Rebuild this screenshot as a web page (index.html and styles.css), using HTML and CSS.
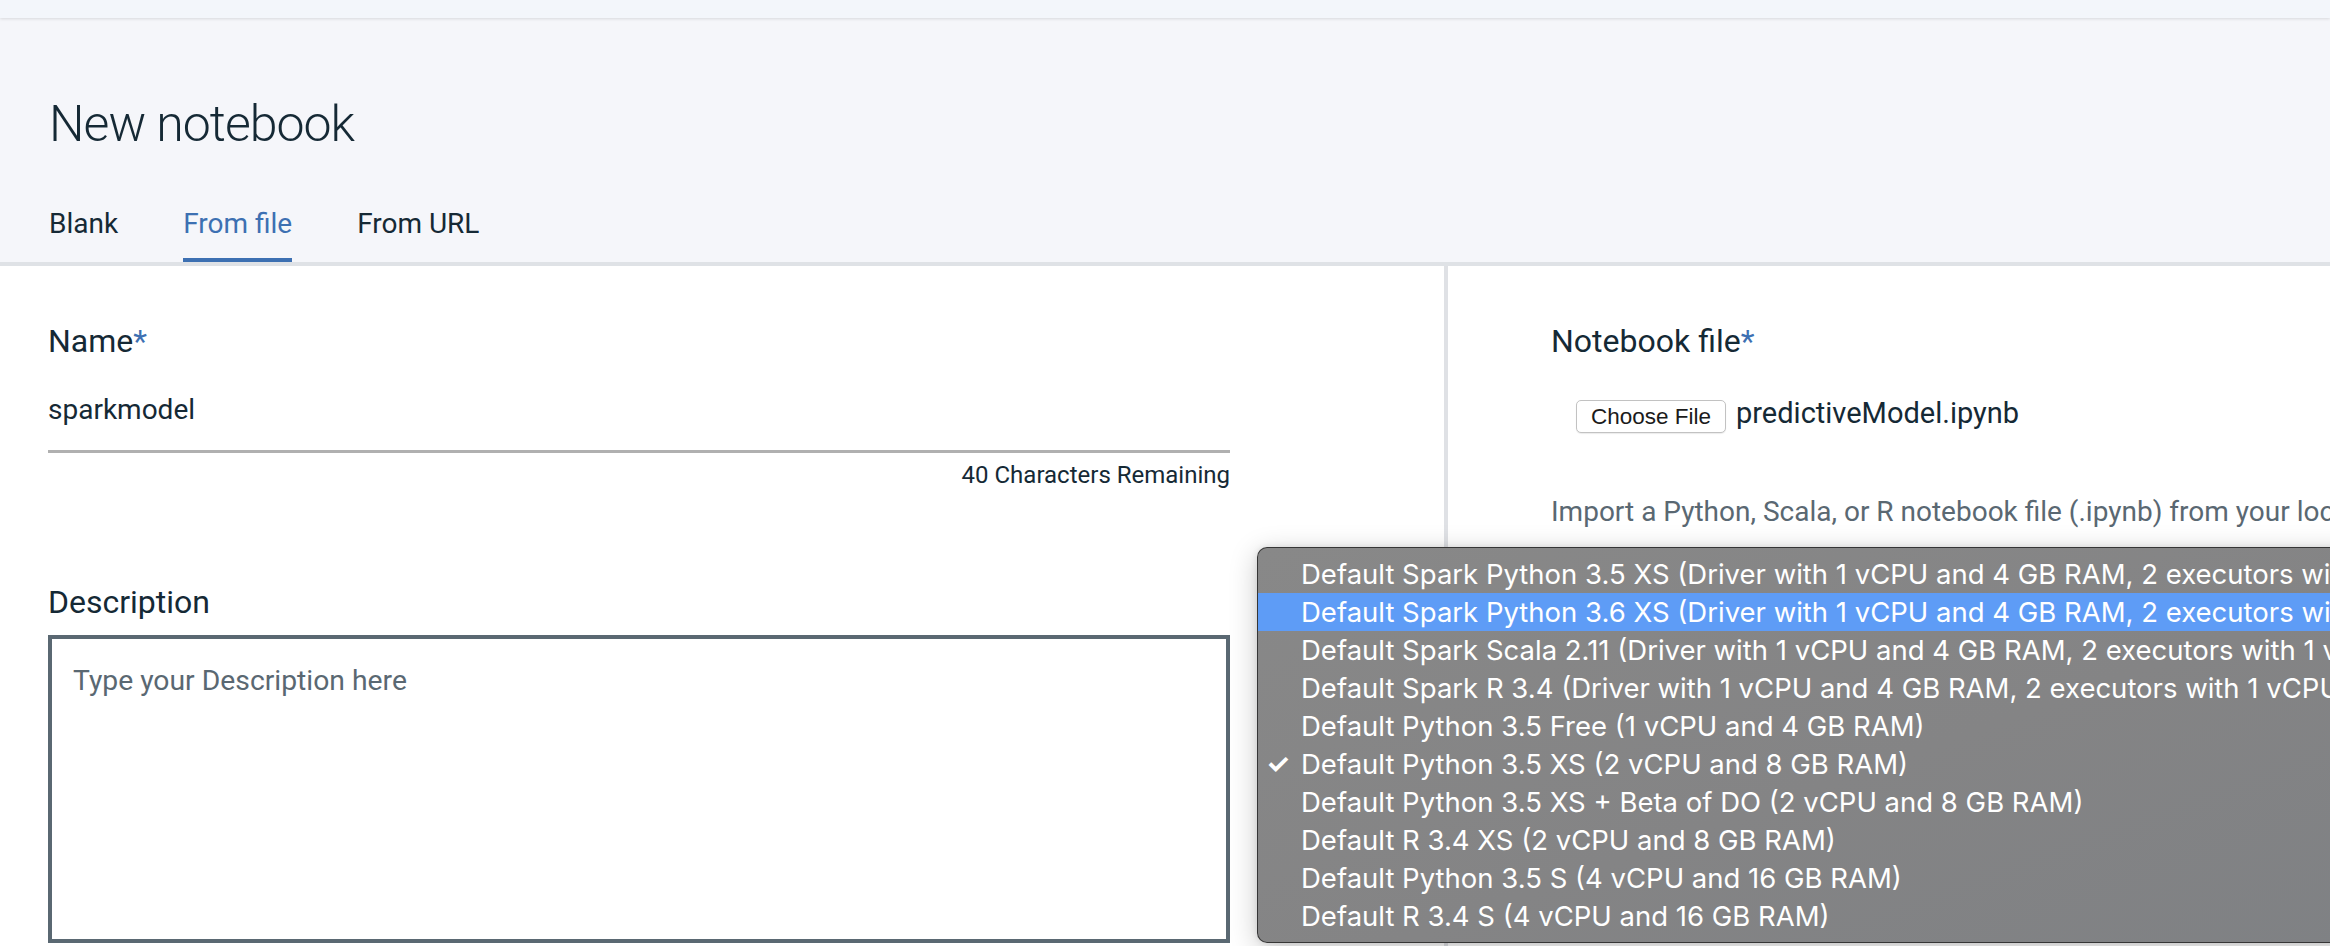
FILE: index.html
```html
<!DOCTYPE html>
<html lang="en">
<head>
<meta charset="utf-8">
<title>New notebook</title>
<link rel="stylesheet" href="styles.css">
</head>
<body>
<div class="topbar"></div>
<header class="header">
  <h1 class="title">New notebook</h1>
  <nav class="tabs">
    <span class="tab">Blank</span>
    <span class="tab tab-active">From file</span>
    <span class="tab">From URL</span>
  </nav>
</header>
<main class="main">
  <section class="panel panel-left">
    <div class="label">Name<span class="req">*</span></div>
    <div class="text-input">sparkmodel</div>
    <div class="counter">40 Characters Remaining</div>
    <div class="label label-desc">Description</div>
    <div class="textarea"><span class="placeholder">Type your Description here</span></div>
  </section>
  <section class="panel panel-right">
    <div class="label">Notebook file<span class="req">*</span></div>
    <div class="file-row">
      <span class="file-btn">Choose File</span>
      <span class="file-name">predictiveModel.ipynb</span>
    </div>
    <p class="help">Import a Python, Scala, or R notebook file (.ipynb) from your local desktop.</p>
    <p class="help-link"><span class="link">Learn more</span> about notebook runtimes and environments</p>
  </section>
</main>
<div class="select-menu">
  <div class="opt">Default Spark Python 3.5 XS (Driver with 1 vCPU and 4 GB RAM, 2 executors with 1 vCPU and 4 GB RAM)</div>
  <div class="opt opt-hl">Default Spark Python 3.6 XS (Driver with 1 vCPU and 4 GB RAM, 2 executors with 1 vCPU and 4 GB RAM)</div>
  <div class="opt">Default Spark Scala 2.11 (Driver with 1 vCPU and 4 GB RAM, 2 executors with 1 vCPU and 4 GB RAM)</div>
  <div class="opt">Default Spark R 3.4 (Driver with 1 vCPU and 4 GB RAM, 2 executors with 1 vCPU and 4 GB RAM)</div>
  <div class="opt">Default Python 3.5 Free (1 vCPU and 4 GB RAM)</div>
  <div class="opt opt-checked"><span class="check">✓</span>Default Python 3.5 XS (2 vCPU and 8 GB RAM)</div>
  <div class="opt">Default Python 3.5 XS + Beta of DO (2 vCPU and 8 GB RAM)</div>
  <div class="opt">Default R 3.4 XS (2 vCPU and 8 GB RAM)</div>
  <div class="opt">Default Python 3.5 S (4 vCPU and 16 GB RAM)</div>
  <div class="opt">Default R 3.4 S (4 vCPU and 16 GB RAM)</div>
</div>
</body>
</html>
```

FILE: styles.css
```css
html, body {
  margin: 0;
  padding: 0;
  width: 2330px;
  height: 946px;
  overflow: hidden;
  background: #ffffff;
}
body {
  font-family: Roboto, "Noto Sans", sans-serif;
  color: #152935;
  position: relative;
}
.topbar {
  height: 18px;
  background: #f3f6fb;
  box-shadow: 0 1px 3px rgba(0, 0, 0, 0.12);
  position: relative;
  z-index: 1;
}
.header {
  background: #f5f6fa;
  padding: 80px 0 0 49px;
  box-sizing: border-box;
  border-bottom: 4px solid #dfe2e6;
  height: 248px;
}
.title {
  margin: 0;
  font-size: 50px;
  line-height: 52px;
  font-weight: 300;
  letter-spacing: -1px;
  color: #152935;
}
.tabs {
  display: flex;
  gap: 65px;
  margin-top: 60px;
}
.tab {
  font-size: 28px;
  line-height: 28px;
  padding-bottom: 20px;
  border-bottom: 4px solid transparent;
  color: #152935;
}
.tab-active {
  color: #3d70b2;
  border-bottom-color: #3d70b2;
}
.main {
  display: flex;
  height: 680px;
}
.panel {
  box-sizing: border-box;
  padding-top: 57px;
}
.panel-left {
  width: 1444px;
  padding-left: 48px;
  padding-right: 214px;
  display: flex;
  flex-direction: column;
}
.panel-right {
  flex: 1;
  border-left: 4px solid #dfe1e5;
  padding-left: 103px;
  overflow: hidden;
}
.label {
  font-size: 32px;
  line-height: 36px;
  color: #152935;
}
.req {
  color: #3d70b2;
}
.text-input {
  margin-top: 31px;
  font-size: 28px;
  line-height: 40px;
  padding-bottom: 20px;
  border-bottom: 3px solid #b0b0b0;
}
.counter {
  margin-top: 7px;
  font-size: 24px;
  line-height: 30px;
  text-align: right;
}
.label-desc {
  margin-top: 94px;
}
.textarea {
  margin-top: 15px;
  height: 308px;
  box-sizing: border-box;
  border: 4px solid #5a6872;
  padding: 22px 21px;
  font-size: 28.3px;
  line-height: 40px;
  background: #fff;
}
.placeholder {
  color: #5a6872;
}
.file-row {
  margin-top: 37px;
  margin-left: 25px;
  display: flex;
  align-items: flex-start;
  gap: 10px;
}
.file-btn {
  margin-top: 4px;
  width: 150px;
  height: 33px;
  box-sizing: border-box;
  border: 1px solid #c2c2c2;
  border-radius: 5px;
  background: #ffffff;
  box-shadow: 0 1px 1px rgba(0, 0, 0, 0.08);
  font-family: "Liberation Sans", Arial, sans-serif;
  font-size: 22.5px;
  line-height: 31px;
  text-align: center;
  color: #1b1b1b;
}
.file-name {
  font-size: 29px;
  line-height: 34px;
  color: #152935;
}
.help {
  margin: 57px 0 0 0;
  font-size: 28px;
  line-height: 44px;
  color: #5a6872;
  white-space: nowrap;
}
.help-link {
  margin: 353px 0 0 0;
  font-size: 28px;
  line-height: 44px;
  color: #5a6872;
  white-space: nowrap;
}
.link {
  color: #3d70b2;
}
.select-menu {
  position: absolute;
  left: 1257px;
  top: 547px;
  right: -60px;
  height: 396px;
  box-sizing: border-box;
  padding: 7px 0 9px 0;
  border: 1px solid rgba(40, 40, 40, 0.85);
  border-radius: 10px;
  background: linear-gradient(160deg, #888888 0%, #848485 55%, #7f8184 100%);
  box-shadow: 0 6px 28px rgba(0, 0, 0, 0.22), 0 0 6px rgba(0, 0, 0, 0.1);
  font-family: Inter, "Liberation Sans", sans-serif;
  font-size: 27.5px;
  color: #ffffff;
  overflow: hidden;
  z-index: 5;
}
.opt {
  position: relative;
  height: 38px;
  line-height: 38px;
  padding-left: 43px;
  white-space: nowrap;
}
.opt-hl {
  background: #5e9cf6;
}
.check {
  position: absolute;
  left: 8px;
  top: 0;
  font-size: 27px;
  font-weight: 700;
}
```
